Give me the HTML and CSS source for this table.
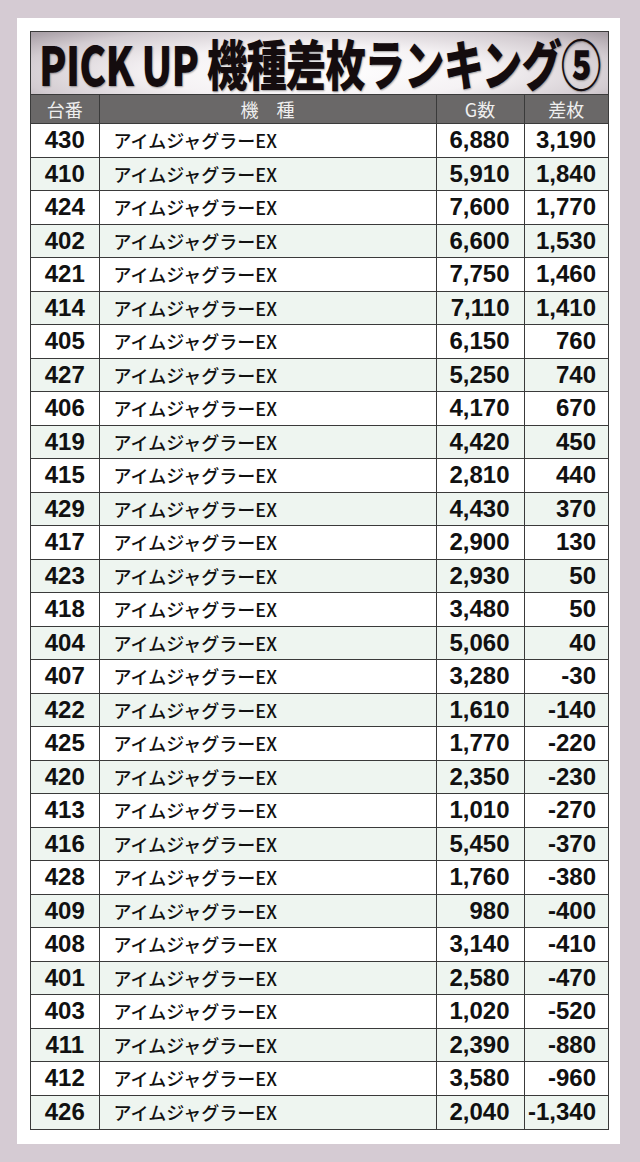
FILE: index.html
```html
<!DOCTYPE html>
<html lang="ja">
<head>
<meta charset="utf-8">
<title>PICK UP 機種差枚ランキング⑤</title>
<link rel="stylesheet" href="styles.css">
</head>
<body>
<div class="card">
  <div class="sheet">
    <div class="title"><span class="title-text">PICK UP 機種差枚ランキング⑤</span></div>
    <table class="rank">
      <colgroup>
        <col class="c-no"><col class="c-name"><col class="c-g"><col class="c-diff">
      </colgroup>
      <thead>
        <tr><th>台番</th><th>機　種</th><th>G数</th><th>差枚</th></tr>
      </thead>
      <tbody>
        <tr><td class="no">430</td><td class="name">アイムジャグラーEX</td><td class="num g">6,880</td><td class="num">3,190</td></tr>
        <tr><td class="no">410</td><td class="name">アイムジャグラーEX</td><td class="num g">5,910</td><td class="num">1,840</td></tr>
        <tr><td class="no">424</td><td class="name">アイムジャグラーEX</td><td class="num g">7,600</td><td class="num">1,770</td></tr>
        <tr><td class="no">402</td><td class="name">アイムジャグラーEX</td><td class="num g">6,600</td><td class="num">1,530</td></tr>
        <tr><td class="no">421</td><td class="name">アイムジャグラーEX</td><td class="num g">7,750</td><td class="num">1,460</td></tr>
        <tr><td class="no">414</td><td class="name">アイムジャグラーEX</td><td class="num g">7,110</td><td class="num">1,410</td></tr>
        <tr><td class="no">405</td><td class="name">アイムジャグラーEX</td><td class="num g">6,150</td><td class="num">760</td></tr>
        <tr><td class="no">427</td><td class="name">アイムジャグラーEX</td><td class="num g">5,250</td><td class="num">740</td></tr>
        <tr><td class="no">406</td><td class="name">アイムジャグラーEX</td><td class="num g">4,170</td><td class="num">670</td></tr>
        <tr><td class="no">419</td><td class="name">アイムジャグラーEX</td><td class="num g">4,420</td><td class="num">450</td></tr>
        <tr><td class="no">415</td><td class="name">アイムジャグラーEX</td><td class="num g">2,810</td><td class="num">440</td></tr>
        <tr><td class="no">429</td><td class="name">アイムジャグラーEX</td><td class="num g">4,430</td><td class="num">370</td></tr>
        <tr><td class="no">417</td><td class="name">アイムジャグラーEX</td><td class="num g">2,900</td><td class="num">130</td></tr>
        <tr><td class="no">423</td><td class="name">アイムジャグラーEX</td><td class="num g">2,930</td><td class="num">50</td></tr>
        <tr><td class="no">418</td><td class="name">アイムジャグラーEX</td><td class="num g">3,480</td><td class="num">50</td></tr>
        <tr><td class="no">404</td><td class="name">アイムジャグラーEX</td><td class="num g">5,060</td><td class="num">40</td></tr>
        <tr><td class="no">407</td><td class="name">アイムジャグラーEX</td><td class="num g">3,280</td><td class="num">-30</td></tr>
        <tr><td class="no">422</td><td class="name">アイムジャグラーEX</td><td class="num g">1,610</td><td class="num">-140</td></tr>
        <tr><td class="no">425</td><td class="name">アイムジャグラーEX</td><td class="num g">1,770</td><td class="num">-220</td></tr>
        <tr><td class="no">420</td><td class="name">アイムジャグラーEX</td><td class="num g">2,350</td><td class="num">-230</td></tr>
        <tr><td class="no">413</td><td class="name">アイムジャグラーEX</td><td class="num g">1,010</td><td class="num">-270</td></tr>
        <tr><td class="no">416</td><td class="name">アイムジャグラーEX</td><td class="num g">5,450</td><td class="num">-370</td></tr>
        <tr><td class="no">428</td><td class="name">アイムジャグラーEX</td><td class="num g">1,760</td><td class="num">-380</td></tr>
        <tr><td class="no">409</td><td class="name">アイムジャグラーEX</td><td class="num g">980</td><td class="num">-400</td></tr>
        <tr><td class="no">408</td><td class="name">アイムジャグラーEX</td><td class="num g">3,140</td><td class="num">-410</td></tr>
        <tr><td class="no">401</td><td class="name">アイムジャグラーEX</td><td class="num g">2,580</td><td class="num">-470</td></tr>
        <tr><td class="no">403</td><td class="name">アイムジャグラーEX</td><td class="num g">1,020</td><td class="num">-520</td></tr>
        <tr><td class="no">411</td><td class="name">アイムジャグラーEX</td><td class="num g">2,390</td><td class="num">-880</td></tr>
        <tr><td class="no">412</td><td class="name">アイムジャグラーEX</td><td class="num g">3,580</td><td class="num">-960</td></tr>
        <tr><td class="no">426</td><td class="name">アイムジャグラーEX</td><td class="num g">2,040</td><td class="num">-1,340</td></tr>
      </tbody>
    </table>
  </div>
</div>
</body>
</html>
```
FILE: styles.css
```css
html, body {
  margin: 0;
  padding: 0;
}
body {
  background: #d5cbd3;
  width: 640px;
  height: 1162px;
  overflow: hidden;
  font-family: "Liberation Sans", "Noto Sans CJK JP", sans-serif;
}
.card {
  background: #ffffff;
  margin: 18px 20px 0 17px;
  padding: 13px 11px 14px 13px;
}
.sheet {
  border: 1px solid #3a3a3a;
}
.title {
  height: 62px;
  border-bottom: 1px solid #3a3a3a;
  background: radial-gradient(ellipse 65% 95% at 50% 65%, #ffffff 0%, #f5f2f4 45%, #d3ccd1 80%, #aaa1a8 100%);
  display: flex;
  align-items: center;
  justify-content: center;
}
.title-text {
  display: inline-block;
  flex: none;
  font-family: "Noto Sans CJK JP", sans-serif;
  font-weight: 900;
  font-size: 54px;
  line-height: 1;
  color: #140c0e;
  letter-spacing: -1px;
  white-space: nowrap;
  transform: scaleX(0.745);
  text-shadow: 1px 1px 2px rgba(0,0,0,0.35);
}
.rank {
  width: 100%;
  border-collapse: collapse;
  table-layout: fixed;
}
.c-no { width: 68px; }
.c-name { width: 337px; }
.c-g { width: 88px; }
.c-diff { width: auto; }
.rank th {
  height: 28px;
  padding: 0;
  background: #6a6868;
  color: #efefef;
  font-family: "Noto Sans CJK JP", sans-serif;
  font-weight: 400;
  font-size: 18px;
  line-height: 28px;
  text-align: center;
  border-left: 1px solid #3a3a3a;
  border-bottom: 1px solid #3a3a3a;
}
.rank th:first-child { border-left: none; }
.rank td {
  height: 33.5px;
  padding: 0;
  border-left: 1px solid #3a3a3a;
  border-top: 1px solid #3a3a3a;
  color: #111111;
  box-sizing: border-box;
}
.rank td:first-child { border-left: none; }
.rank tbody tr:first-child td { border-top: none; }
.rank tbody tr:nth-child(even) td { background: #eef5f0; }
.no {
  text-align: center;
  font-weight: 700;
  font-size: 24px;
}
.name {
  font-family: "Noto Sans CJK JP", sans-serif;
  font-weight: 500;
  font-size: 18px;
  padding-left: 14px !important;
}
.num {
  text-align: right;
  font-weight: 700;
  font-size: 24px;
  padding-right: 12px !important;
}
.num.g {
  padding-right: 14px !important;
}
```
